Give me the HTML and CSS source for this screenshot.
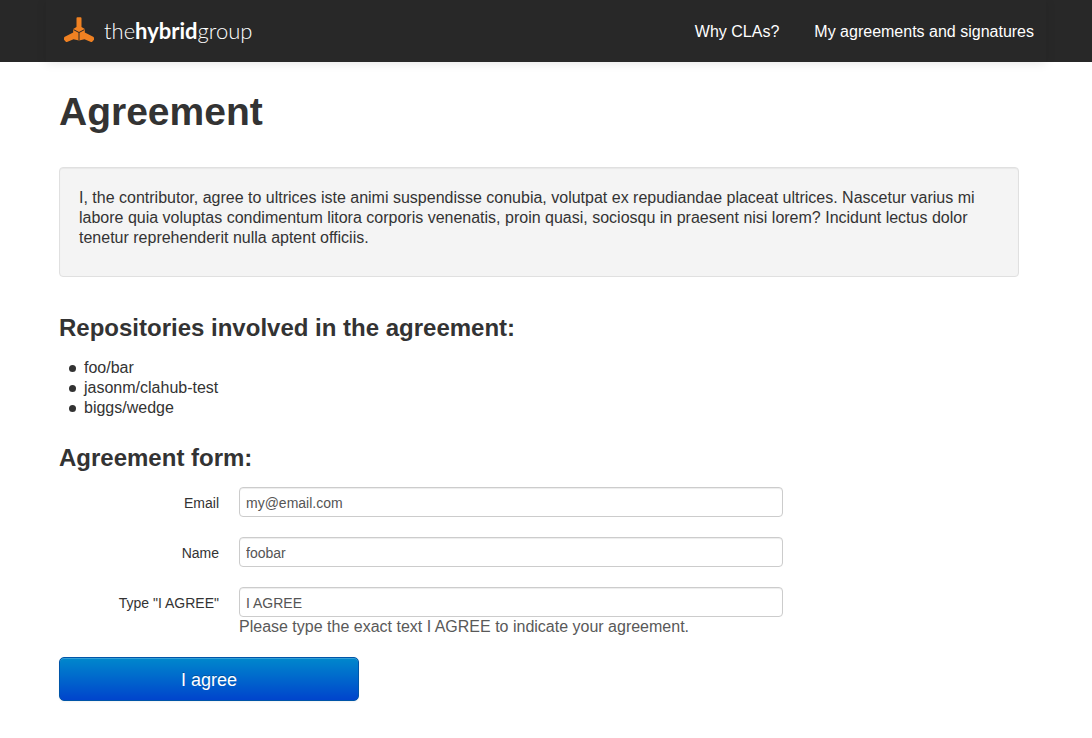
FILE: index.html
```html
<!DOCTYPE html>
<html lang="en">
<head>
<meta charset="utf-8">
<meta name="viewport" content="width=device-width, initial-scale=1">
<title>Agreement</title>
<link rel="stylesheet" href="styles.css">
</head>
<body>
<header class="navbar">
  <div class="navbar-inner">
    <a class="brand" href="#">
      <svg class="brand-mark" viewBox="0 0 30 26" aria-hidden="true">
        <path fill="#f08122" d="M12.500 1.200Q12.500 .3 13.400 .3h3.200Q17.500 .3 17.500 1.200v8.900L20.800 12.100v3.300l8.400 4.400q.8.500.8 1.400v1.500l-1.800 2q-.5.400-1.200.2L20.500 22.200 15 23.500 9.500 22.200 3 24.900q-.7.200-1.200-.2L0 22.700v-1.500q0-.9.800-1.400l8.400-4.400v-3.300l3.300-2z"/>
        <path fill="none" stroke="#282828" stroke-width="1" d="M9.500 12.600L15 15.500l5.500-2.900M15 15.500v8"/>
      </svg>
      <span class="brand-name">the<b>hybrid</b>group</span>
    </a>
    <nav class="nav">
      <a href="#">Why CLAs?</a>
      <a href="#">My agreements and signatures</a>
    </nav>
  </div>
</header>
<main class="page">
  <h1>Agreement</h1>
  <div class="well">
    <p>I, the contributor, agree to ultrices iste animi suspendisse conubia, volutpat ex repudiandae placeat ultrices. Nascetur varius mi labore quia voluptas condimentum litora corporis venenatis, proin quasi, sociosqu in praesent nisi lorem? Incidunt lectus dolor tenetur reprehenderit nulla aptent officiis.</p>
  </div>
  <h2>Repositories involved in the agreement:</h2>
  <ul class="repos">
    <li>foo/bar</li>
    <li>jasonm/clahub-test</li>
    <li>biggs/wedge</li>
  </ul>
  <h2>Agreement form:</h2>
  <form class="form">
    <div class="row">
      <label for="email">Email</label>
      <div class="field"><input id="email" type="text" value="my@email.com"></div>
    </div>
    <div class="row">
      <label for="name">Name</label>
      <div class="field"><input id="name" type="text" value="foobar"></div>
    </div>
    <div class="row">
      <label for="agree">Type "I AGREE"</label>
      <div class="field">
        <input id="agree" type="text" value="I AGREE" aria-describedby="agree-help">
        <p class="help" id="agree-help">Please type the exact text I AGREE to indicate your agreement.</p>
      </div>
    </div>
    <button class="submit" type="submit">I agree</button>
  </form>
</main>
</body>
</html>
```

FILE: styles.css
```css
* {
  box-sizing: border-box;
}

body {
  margin: 0;
  background: #fff;
  color: #333;
  font: 16px/20px "Helvetica Neue", Helvetica, "Liberation Sans", Arial, sans-serif;
}

.navbar {
  background: #282828;
}

.navbar-inner {
  display: flex;
  align-items: center;
  justify-content: space-between;
  max-width: 1000px;
  min-height: 62px;
  margin: 0 auto;
  padding: 0 12px 0 18px;
  box-shadow: 0 1px 10px rgba(0, 0, 0, 0.1);
}

.brand {
  display: flex;
  align-items: center;
  gap: 10px;
  color: #fff;
  text-decoration: none;
}

.brand-mark {
  width: 30px;
  height: 26px;
  margin-bottom: 2px;
}

.brand-name {
  font: 300 22px/30px Lato, sans-serif;
}

.brand-name b {
  font-weight: 700;
}

.nav {
  display: flex;
  gap: 35px;
  padding-top: 2px;
}

.nav a {
  color: #fff;
  text-decoration: none;
}

.page {
  max-width: 1000px;
  margin: 0 auto;
  padding: 30px 27px 36px 13px;
}

h1,
h2 {
  margin: 0;
  line-height: 40px;
}

h1 {
  margin-bottom: 35px;
  font-size: 39px;
}

h2 {
  margin-bottom: 9px;
  font-size: 24px;
}

.well {
  margin-bottom: 31px;
  padding: 20px 19px 28px;
  border: 1px solid #e0e0e0;
  border-radius: 4px;
  background: #f4f4f4;
  box-shadow: inset 0 1px 1px rgba(0, 0, 0, 0.05);
}

.well p {
  margin: 0;
}

.repos {
  margin: 0 0 20px;
  padding: 1px 0 0 10px;
  list-style: none;
}

.repos li {
  display: flex;
  align-items: center;
  gap: 8px;
}

.repos li::before {
  content: "";
  width: 7px;
  height: 7px;
  border-radius: 50%;
  background: #333;
}

.form {
  display: flex;
  flex-direction: column;
  gap: 20px;
}

.row {
  display: flex;
  gap: 20px;
}

.row label {
  flex: 0 0 160px;
  padding-top: 6px;
  font-size: 14px;
  text-align: right;
}

.field {
  flex: 0 1 544px;
  min-width: 0;
}

.field input {
  display: block;
  width: 100%;
  height: 30px;
  padding: 5px 6px 3px;
  border: 1px solid #ccc;
  border-radius: 4px;
  background: #fff;
  box-shadow: inset 0 1px 1px rgba(0, 0, 0, 0.075);
  color: #555;
  font: inherit;
  font-size: 14px;
}

.help {
  margin: 0;
  color: #595959;
}

.submit {
  width: 300px;
  max-width: 100%;
  height: 44px;
  padding-top: 2px;
  border: 1px solid #0055a8;
  border-radius: 5px;
  background: linear-gradient(#0088cc, #0044cc);
  box-shadow: inset 0 1px 0 rgba(255, 255, 255, 0.2), 0 1px 2px rgba(0, 0, 0, 0.05);
  color: #fff;
  font: inherit;
  font-size: 18px;
  text-shadow: 0 -1px 0 rgba(0, 0, 0, 0.25);
}
```
